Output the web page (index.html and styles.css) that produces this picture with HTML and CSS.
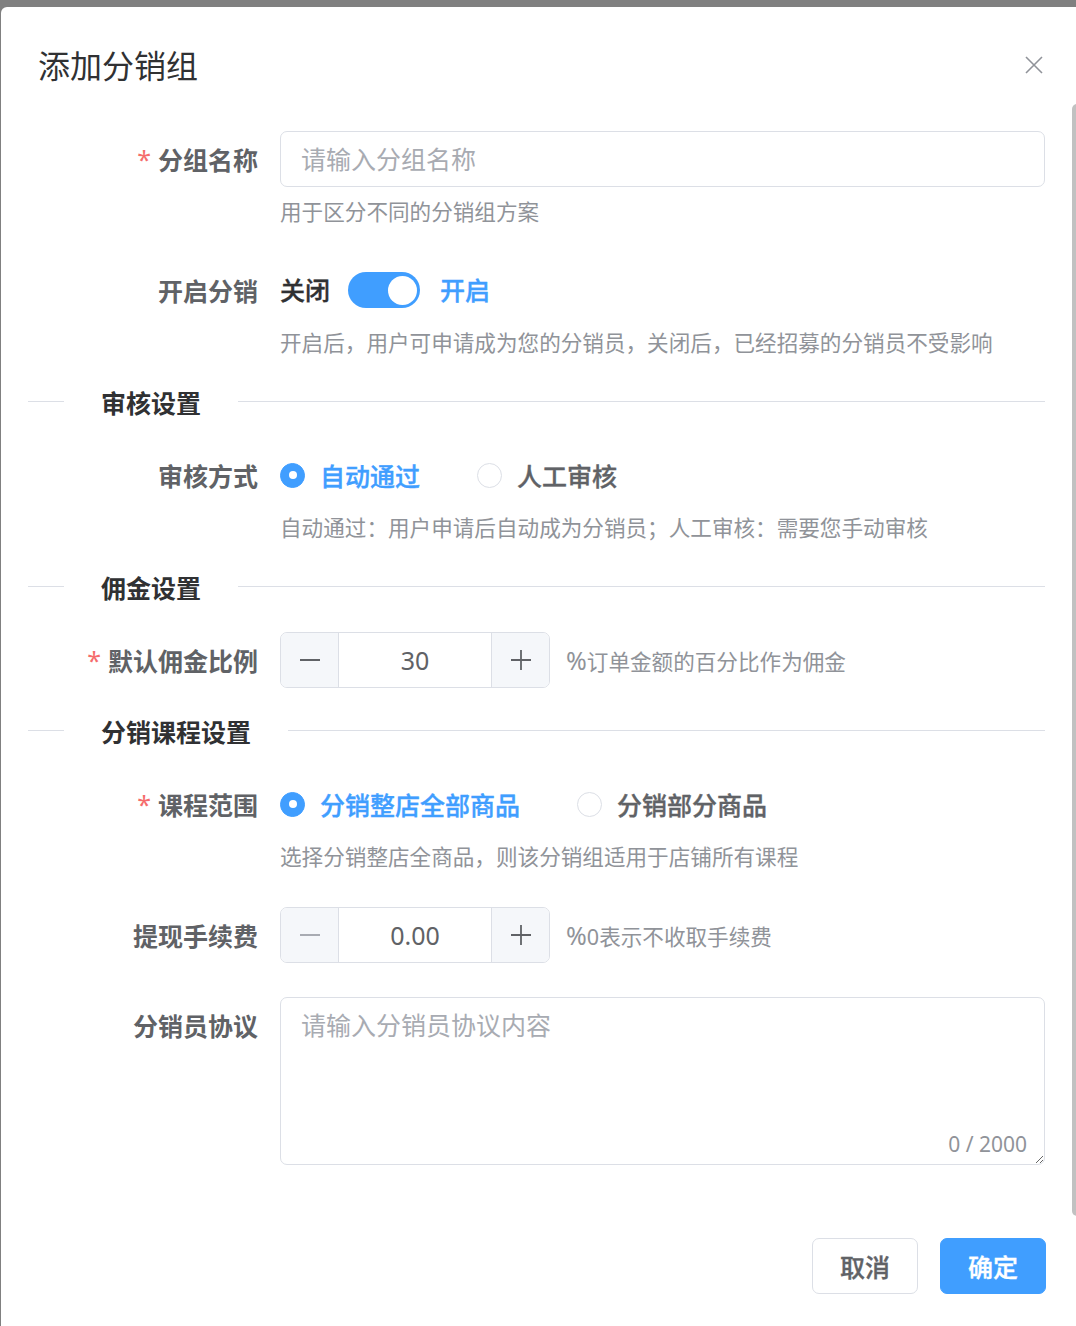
FILE: index.html
```html
<!DOCTYPE html>
<html lang="zh-CN">
<head>
<meta charset="utf-8">
<title>添加分销组</title>
<link rel="stylesheet" href="styles.css">
</head>
<body>
<div class="page">
  <div class="dialog">
    <header class="dlg-header">
      <span class="dlg-title">添加分销组</span>
      <button class="dlg-close" type="button" aria-label="关闭">
        <svg viewBox="0 0 18 18" width="18" height="18"><path d="M1 1L17 17M17 1L1 17" stroke="#909399" stroke-width="1.6" fill="none"/></svg>
      </button>
    </header>
    <div class="dlg-body">
      <form class="form">
        <div class="item">
          <label class="item-label required">分组名称</label>
          <div class="item-content">
            <input class="input" type="text" placeholder="请输入分组名称">
            <div class="help">用于区分不同的分销组方案</div>
          </div>
        </div>

        <div class="item">
          <label class="item-label">开启分销</label>
          <div class="item-content">
            <div class="switch-row">
              <span class="switch-text">关闭</span>
              <span class="switch-core"><span class="switch-dot"></span></span>
              <span class="switch-text active">开启</span>
            </div>
            <div class="help">开启后，用户可申请成为您的分销员，关闭后，已经招募的分销员不受影响</div>
          </div>
        </div>

        <div class="divider"><span class="divider-line short"></span><span class="divider-text">审核设置</span><span class="divider-line"></span></div>

        <div class="item">
          <label class="item-label">审核方式</label>
          <div class="item-content">
            <div class="radio-group">
              <span class="radio checked"><span class="radio-circle"></span>自动通过</span>
              <span class="radio"><span class="radio-circle"></span>人工审核</span>
            </div>
            <div class="help">自动通过：用户申请后自动成为分销员；人工审核：需要您手动审核</div>
          </div>
        </div>

        <div class="divider"><span class="divider-line short"></span><span class="divider-text">佣金设置</span><span class="divider-line"></span></div>

        <div class="item">
          <label class="item-label required">默认佣金比例</label>
          <div class="item-content">
            <div class="number-row">
              <div class="number">
                <span class="num-btn dec"><svg viewBox="0 0 20 20" width="20" height="20"><path d="M0 10H20" stroke="currentColor" stroke-width="1.8"/></svg></span>
                <span class="num-value">30</span>
                <span class="num-btn inc"><svg viewBox="0 0 20 20" width="20" height="20"><path d="M0 10H20M10 0V20" stroke="currentColor" stroke-width="1.8"/></svg></span>
              </div>
              <span class="suffix"><span class="pct">%</span><span class="tip">订单金额的百分比作为佣金</span></span>
            </div>
          </div>
        </div>

        <div class="divider"><span class="divider-line short"></span><span class="divider-text">分销课程设置</span><span class="divider-line"></span></div>

        <div class="item">
          <label class="item-label required">课程范围</label>
          <div class="item-content">
            <div class="radio-group">
              <span class="radio checked"><span class="radio-circle"></span>分销整店全部商品</span>
              <span class="radio"><span class="radio-circle"></span>分销部分商品</span>
            </div>
            <div class="help">选择分销整店全商品，则该分销组适用于店铺所有课程</div>
          </div>
        </div>

        <div class="item">
          <label class="item-label">提现手续费</label>
          <div class="item-content">
            <div class="number-row">
              <div class="number">
                <span class="num-btn dec disabled"><svg viewBox="0 0 20 20" width="20" height="20"><path d="M0 10H20" stroke="currentColor" stroke-width="1.8"/></svg></span>
                <span class="num-value">0.00</span>
                <span class="num-btn inc"><svg viewBox="0 0 20 20" width="20" height="20"><path d="M0 10H20M10 0V20" stroke="currentColor" stroke-width="1.8"/></svg></span>
              </div>
              <span class="suffix"><span class="pct">%</span><span class="tip">0表示不收取手续费</span></span>
            </div>
          </div>
        </div>

        <div class="item">
          <label class="item-label">分销员协议</label>
          <div class="item-content">
            <div class="textarea-wrap">
              <textarea class="textarea" placeholder="请输入分销员协议内容"></textarea>
              <span class="count">0 / 2000</span>
            </div>
          </div>
        </div>
      </form>
    </div>
    <footer class="dlg-footer">
      <button class="btn" type="button">取消</button>
      <button class="btn btn-primary" type="button">确定</button>
    </footer>
  </div>
</div>
<div class="scrollbar-thumb"></div>
</body>
</html>
```

FILE: styles.css
```css
html, body {
  margin: 0;
  height: 100%;
  overflow: hidden;
  background: #808080;
  font-family: "Noto Sans", "Noto Sans CJK SC", sans-serif;
}

.page {
  padding: 7px 0 0 1px;
}

.dialog {
  width: 1081px;
  background: #fff;
  border-radius: 6px 6px 0 0;
  box-sizing: border-box;
}

.dlg-header {
  display: flex;
  justify-content: space-between;
  align-items: center;
  padding: 37px 37px 0 37px;
}

.dlg-title {
  font-size: 32px;
  line-height: 44px;
  color: #303133;
}

.dlg-close {
  width: 18px;
  height: 18px;
  margin: 0 2px 2px 0;
  padding: 0;
  border: 0;
  background: none;
  display: flex;
}

.dlg-body {
  padding: 43px 37px 0 36px;
}

.item {
  display: flex;
  margin-bottom: 34px;
}

.item-label {
  flex-shrink: 0;
  width: 243px;
  height: 56px;
  box-sizing: border-box;
  padding-right: 22px;
  display: flex;
  justify-content: flex-end;
  align-items: center;
  font-size: 25px;
  font-weight: 700;
  color: #606266;
}

.required::before {
  content: "*";
  color: #f56c6c;
  margin-right: 7px;
  font-weight: 400;
}

.item-content {
  flex: 1;
  min-width: 0;
}

.input {
  display: block;
  width: 100%;
  height: 56px;
  box-sizing: border-box;
  border: 1px solid #dcdfe6;
  border-radius: 7px;
  padding: 0 20px;
  font-family: inherit;
  font-size: 25px;
  color: #606266;
  outline: none;
}

.input::placeholder,
.textarea::placeholder {
  color: #a8abb2;
}

.help {
  margin-top: 9px;
  font-size: 21.6px;
  line-height: 32px;
  color: #909399;
}

/* switch */
.switch-row {
  display: flex;
  align-items: center;
  height: 56px;
}

.switch-text {
  font-size: 25px;
  font-weight: 500;
  color: #303133;
  -webkit-text-stroke: 0.35px currentColor;
  padding-bottom: 3px;
}

.switch-text.active {
  color: #409eff;
}

.switch-core {
  width: 72px;
  height: 36px;
  box-sizing: border-box;
  padding: 0 3.5px;
  margin: 0 20px 0 18px;
  border-radius: 18px;
  background: #409eff;
  display: flex;
  align-items: center;
  justify-content: flex-end;
}

.switch-dot {
  width: 29px;
  height: 29px;
  border-radius: 50%;
  background: #fff;
}

/* divider */
.divider {
  display: flex;
  align-items: center;
  height: 16px;
  margin: 0 0 38px -9px;
}

.divider-line {
  flex: 1;
  height: 1px;
  background: #dcdfe6;
}

.divider-line.short {
  flex: 0 0 36px;
}

.divider-text {
  padding: 3px 37px 0;
  font-size: 25px;
  line-height: 16px;
  font-weight: 700;
  color: #303133;
  white-space: nowrap;
}

/* radio */
.radio-group {
  display: flex;
  align-items: center;
  height: 56px;
}

.radio {
  display: flex;
  align-items: center;
  margin-right: 57px;
  font-size: 25px;
  font-weight: 500;
  color: #606266;
  -webkit-text-stroke: 0.35px currentColor;
}

.radio-circle {
  width: 25px;
  height: 25px;
  box-sizing: border-box;
  border: 1px solid #dcdfe6;
  border-radius: 50%;
  margin-right: 15px;
  background: #fff;
  display: flex;
  align-items: center;
  justify-content: center;
}

.radio.checked {
  color: #409eff;
}

.radio.checked .radio-circle {
  background: #409eff;
  border-color: #409eff;
}

.radio.checked .radio-circle::after {
  content: "";
  width: 8px;
  height: 8px;
  border-radius: 50%;
  background: #fff;
}

/* input number */
.number-row {
  display: flex;
  align-items: center;
}

.number {
  display: flex;
  width: 270px;
  height: 56px;
  box-sizing: border-box;
  border: 1px solid #dcdfe6;
  border-radius: 7px;
  overflow: hidden;
}

.num-btn {
  width: 57px;
  display: flex;
  align-items: center;
  justify-content: center;
  background: #f5f7fa;
  color: #606266;
}

.num-btn.dec {
  border-right: 1px solid #dcdfe6;
}

.num-btn.inc {
  border-left: 1px solid #dcdfe6;
}

.num-btn.disabled {
  color: #a8abb2;
}

.num-value {
  flex: 1;
  display: flex;
  align-items: center;
  justify-content: center;
  font-size: 25px;
  color: #606266;
}

.suffix {
  margin-left: 16px;
  color: #909399;
}

.suffix .pct {
  font-size: 25px;
}

.suffix .tip {
  font-size: 21.6px;
}

/* textarea */
.textarea-wrap {
  position: relative;
}

.textarea {
  display: block;
  width: 100%;
  height: 168px;
  box-sizing: border-box;
  border: 1px solid #dcdfe6;
  border-radius: 7px;
  padding: 9px 20px;
  font-family: inherit;
  font-size: 25px;
  line-height: 1.5;
  color: #606266;
  resize: vertical;
  outline: none;
}

.count {
  position: absolute;
  right: 18px;
  bottom: 9px;
  font-size: 21px;
  line-height: 24px;
  color: #909399;
  background: #fff;
}

/* footer */
.dlg-footer {
  display: flex;
  justify-content: flex-end;
  gap: 22px;
  padding: 39px 36px 37px 36px;
}

.btn {
  width: 106px;
  height: 56px;
  box-sizing: border-box;
  padding: 0;
  border: 1px solid #dcdfe6;
  border-radius: 7px;
  background: #fff;
  color: #606266;
  font-family: inherit;
  font-size: 25px;
  font-weight: 500;
  -webkit-text-stroke: 0.35px currentColor;
}

.btn-primary {
  background: #409eff;
  border-color: #409eff;
  color: #fff;
}

.scrollbar-thumb {
  position: fixed;
  left: 1072px;
  top: 104px;
  width: 10px;
  height: 1112px;
  border-radius: 5px;
  background: #c1c1c1;
}
```
